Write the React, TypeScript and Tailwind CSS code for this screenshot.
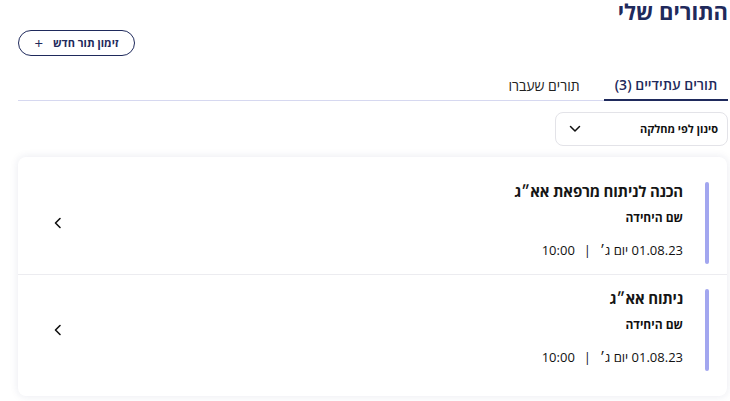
import React from "react";

const font = { fontFamily: '"Open Sans", "Liberation Sans", "DejaVu Sans", sans-serif' };

function ChevronLeft() {
  return (
    <svg width="12" height="12" viewBox="0 0 12 12" fill="none">
      <path d="M8 1.5 L3.5 6 L8 10.5" stroke="#111" strokeWidth="1.6" strokeLinecap="round" strokeLinejoin="round" />
    </svg>
  );
}

function ChevronDown() {
  return (
    <svg width="12" height="8" viewBox="0 0 12 8" fill="none">
      <path d="M1.5 1.5 L6 6 L10.5 1.5" stroke="#111" strokeWidth="1.5" strokeLinecap="round" strokeLinejoin="round" />
    </svg>
  );
}

function Row({ title, cls }: { title: string; cls: string }) {
  return (
    <div className={`flex items-center pr-[18px] pl-[34px] ${cls}`}>
      <div className="w-[4px] h-[82px] rounded-full bg-[#a2a6ef]" />
      <div className="flex flex-col self-start mr-[22px] -mt-[1px]">
        <div className="text-[15px] font-bold text-[#151515] leading-[20px] tracking-[-0.2px]">{title}</div>
        <div className="text-[12px] font-bold text-[#111] leading-[16px] mt-[9px]">שם היחידה</div>
        <div className="text-[13px] text-[#111] leading-[18px] mt-[15px] flex items-center">
          <span>01.08.23 יום ג׳</span>
          <span className="mx-[9px]">|</span>
          <span>10:00</span>
        </div>
      </div>
      <div className="mr-auto">
        <ChevronLeft />
      </div>
    </div>
  );
}

export default function App() {
  return (
    <div dir="rtl" style={font} className="w-[730px] h-[401px] bg-white pr-[2px] pl-[18px] overflow-hidden">
      <h1 className="text-[22px] font-bold text-[#1f2a5c] leading-[22px]">התורים שלי</h1>
      <div className="flex justify-end mt-[8px]">
        <button className="flex items-center gap-[10px] h-[26px] w-[117px] justify-center rounded-full border-[1.5px] border-[#1f2a5c] text-[11px] font-bold text-[#1f2a5c]">
          <span>זימון תור חדש</span>
          <span className="text-[15px] font-normal leading-none">+</span>
        </button>
      </div>
      <div className="flex mt-[14px] border-b border-[#d6d8f0] h-[31px]">
        <div className="w-[124px] flex items-center justify-center border-b-2 border-[#1f2a5c] -mb-[1px] text-[14px] font-semibold text-[#1f2a5c]">
          תורים עתידיים (3)
        </div>
        <div className="w-[120px] flex items-center justify-center text-[14px] text-[#222]">תורים שעברו</div>
      </div>
      <div className="mt-[11px] w-[173px] h-[34px] rounded-[8px] border border-[#e3e3e8] flex items-center justify-between pr-[9px] pl-[13px]">
        <span className="text-[11px] font-bold text-[#111]">סינון לפי מחלקה</span>
        <ChevronDown />
      </div>
      <div className="mt-[11px] rounded-[8px] bg-white shadow-[0_0_8px_rgba(30,40,100,0.10)] mr-[1px]">
        <Row title="הכנה לניתוח מרפאת אא״ג" cls="pt-[25px] pb-[10px] border-b border-[#ececf0]" />
        <Row title="ניתוח אא״ג" cls="pt-[14px] pb-[25px]" />
      </div>
    </div>
  );
}
